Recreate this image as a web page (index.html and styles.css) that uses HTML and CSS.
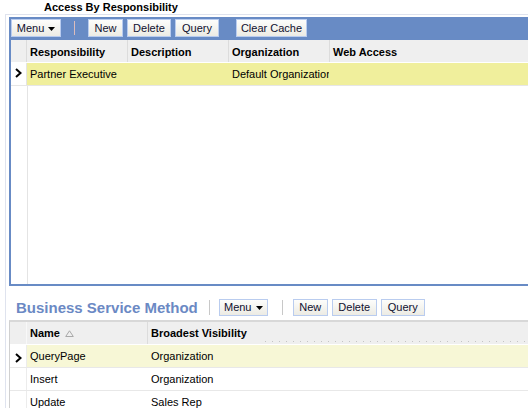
FILE: index.html
```html
<!DOCTYPE html>
<html>
<head>
<meta charset="utf-8">
<title>Access By Responsibility</title>
<link rel="stylesheet" href="styles.css">
</head>
<body>
<div class="title">Access By Responsibility</div>
<div class="frame">
  <div class="panel">
    <div class="toolbar">
      <div class="btn w50">Menu <svg class="caret" width="7" height="4" viewBox="0 0 7 4"><path d="M0 0H7L3.5 4Z" fill="#000"/></svg></div>
      <span class="sep"></span>
      <div class="btn w35">New</div>
      <div class="btn w44 gap">Delete</div>
      <div class="btn w44 gap">Query</div>
      <div class="btn w71 gap17">Clear Cache</div>
    </div>
    <div class="row head">
      <div class="cell ind"></div>
      <div class="cell col">Responsibility</div>
      <div class="cell col">Description</div>
      <div class="cell col">Organization</div>
      <div class="cell rest">Web Access</div>
    </div>
    <div class="row sel">
      <div class="cell ind mark"><svg width="7" height="10" viewBox="0 0 7 10"><path d="M1 1L5.5 5L1 9" fill="none" stroke="#000" stroke-width="2"/></svg></div>
      <div class="cell col nb">Partner Executive</div>
      <div class="cell col nb"></div>
      <div class="cell col nb clip">Default Organization</div>
      <div class="cell rest"></div>
    </div>
    <div class="filler"><div class="ind"></div></div>
  </div>

  <div class="sect-head">
    <div class="sect-title">Business Service Method</div>
    <span class="sep2"></span>
    <div class="btn small w49">Menu <svg class="caret" width="7" height="4" viewBox="0 0 7 4"><path d="M0 0H7L3.5 4Z" fill="#000"/></svg></div>
    <span class="sep3"></span>
    <div class="btn small w35">New</div>
    <div class="btn small w45 gap">Delete</div>
    <div class="btn small w44 gap">Query</div>
  </div>

  <div class="list">
    <div class="lrow lhead">
      <div class="cell lind"></div>
      <div class="cell lname">Name <svg class="sort" width="9" height="7" viewBox="0 0 9 7"><path d="M4.5 0.8L8.3 6.5H0.7Z" fill="none" stroke="#a8a8a8" stroke-width="1"/></svg></div>
      <div class="cell lvis">Broadest Visibility</div>
      <div class="cell lextra"></div>
    </div>
    <div class="lrow lsel">
      <div class="cell lind mark2"><svg width="7" height="10" viewBox="0 0 7 10"><path d="M1 1L5.5 5L1 9" fill="none" stroke="#000" stroke-width="2"/></svg></div>
      <div class="cell lname">QueryPage</div>
      <div class="cell lvis">Organization</div>
      <div class="cell lextra"></div>
    </div>
    <div class="lrow">
      <div class="cell lind"></div>
      <div class="cell lname">Insert</div>
      <div class="cell lvis">Organization</div>
      <div class="cell lextra"></div>
    </div>
    <div class="lrow last">
      <div class="cell lind"></div>
      <div class="cell lname">Update</div>
      <div class="cell lvis">Sales Rep</div>
      <div class="cell lextra"></div>
    </div>
  </div>
</div>
</body>
</html>
```

FILE: styles.css
```css
body {
  margin: 0;
  width: 528px;
  height: 408px;
  overflow: hidden;
  background: #fff;
  color: #000;
  font-family: "Liberation Sans", Arial, sans-serif;
  font-size: 11px;
}

.title {
  height: 14px;
  line-height: 14px;
  padding-left: 44px;
  font-weight: bold;
}

.frame {
  margin-left: 5px;
  width: 530px;
  border-top: 1px solid #dfe3ee;
  border-left: 1px solid #dfe3ee;
  padding: 2px 0 0 3px;
}

.panel {
  border: 2px solid #688bc5;
  background: #fff;
}

.toolbar {
  display: flex;
  align-items: flex-start;
  height: 21px;
  background: #688bc5;
}

.btn {
  box-sizing: border-box;
  display: flex;
  align-items: center;
  justify-content: center;
  gap: 4px;
  height: 18px;
  border: 1px solid #b9ccef;
  background: linear-gradient(#fdfdfb, #ecebe4);
  color: #101030;
  line-height: 16px;
  white-space: nowrap;
}
.btn.small { height: 17px; line-height: 15px; }
.btn .caret { margin-top: 1px; }

.w35 { width: 35px; }
.w44 { width: 44px; }
.w45 { width: 45px; }
.w49 { width: 49px; }
.w50 { width: 50px; }
.w71 { width: 71px; }
.gap { margin-left: 4px; }
.gap17 { margin-left: 17px; }

.sep {
  width: 1px;
  height: 14px;
  margin: 2px 13px 0 13px;
  background: #dcbcbc;
}

.row {
  display: flex;
  height: 22px;
}
.cell {
  box-sizing: border-box;
  padding: 5px 3px 0;
  line-height: 14px;
  white-space: nowrap;
  overflow: hidden;
}
.ind {
  width: 16px;
  padding: 0;
  border-right: 1px solid #dcdcdc;
  flex: none;
}
.col {
  width: 101px;
  flex: none;
  border-right: 1px solid #dcdcdc;
}
.col.nb { border-right: 1px solid transparent; }
.rest { flex: 1; }

.head {
  background: #efefef;
  border-bottom: 1px solid #fff;
  font-weight: bold;
}
.sel {
  border-bottom: 1px solid #e6e6e6;
}
.sel .cell { padding-top: 4px; background: #f0ef9c; }
.sel .cell.ind { background: #fff; border-right-color: #e4e4e4; }
.clip { padding-right: 0; text-overflow: clip; }
.mark { padding: 7px 0 0 4px; }

.filler {
  display: flex;
  height: 198px;
}
.filler .ind { height: 100%; border-right-color: #e4e4e4; }

.sect-head {
  display: flex;
  align-items: center;
  height: 17px;
  padding: 13px 0 4px 7px;
}
.sect-title {
  font-size: 15px;
  font-weight: bold;
  line-height: 17px;
  color: #6b89c4;
  white-space: nowrap;
}
.sep2 {
  width: 1px;
  height: 15px;
  margin: 0 9px 0 11px;
  background: #c8c8c8;
}
.sep3 {
  width: 1px;
  height: 15px;
  margin: 0 10px 0 14px;
  background: #c8c8c8;
}

.list {
  border-left: 1px solid #d0d0d0;
  border-top: 2px solid #d8d8d8;
}
.lrow {
  display: flex;
  height: 22px;
  border-bottom: 1px solid #e8e8e8;
}
.lrow .cell { padding-top: 4px; }
.lhead {
  height: 22px;
  background: #efefef;
  border-bottom: 1px solid #fff;
  font-weight: bold;
}
.lsel .cell { background: #f7f7d6; }
.lsel .lind { background: #fff; }
.lrow.last { height: 17px; border-bottom: 1px solid #aaa89f; }
.lind {
  width: 17px;
  flex: none;
  padding: 0;
  border-right: 1px solid #ececec;
}
.lhead .lind { border-right-color: #f8f8f8; }
.lname {
  width: 121px;
  flex: none;
  display: flex;
  align-items: flex-start;
}
.lhead .lname { border-right: 1px solid #dcdcdc; }
.lvis {
  width: 117px;
  flex: none;
}
.lextra { flex: 1; }
.lhead .lextra {
  background-image: repeating-linear-gradient(to right, #c4c4c4 0 1px, transparent 1px 7px);
  background-size: 100% 1px;
  background-repeat: no-repeat;
  background-position: left 0 bottom 2px;
}
.sort { margin: 4px 0 0 5px; }
.mark2 { padding: 7px 0 0 5px !important; }
```
